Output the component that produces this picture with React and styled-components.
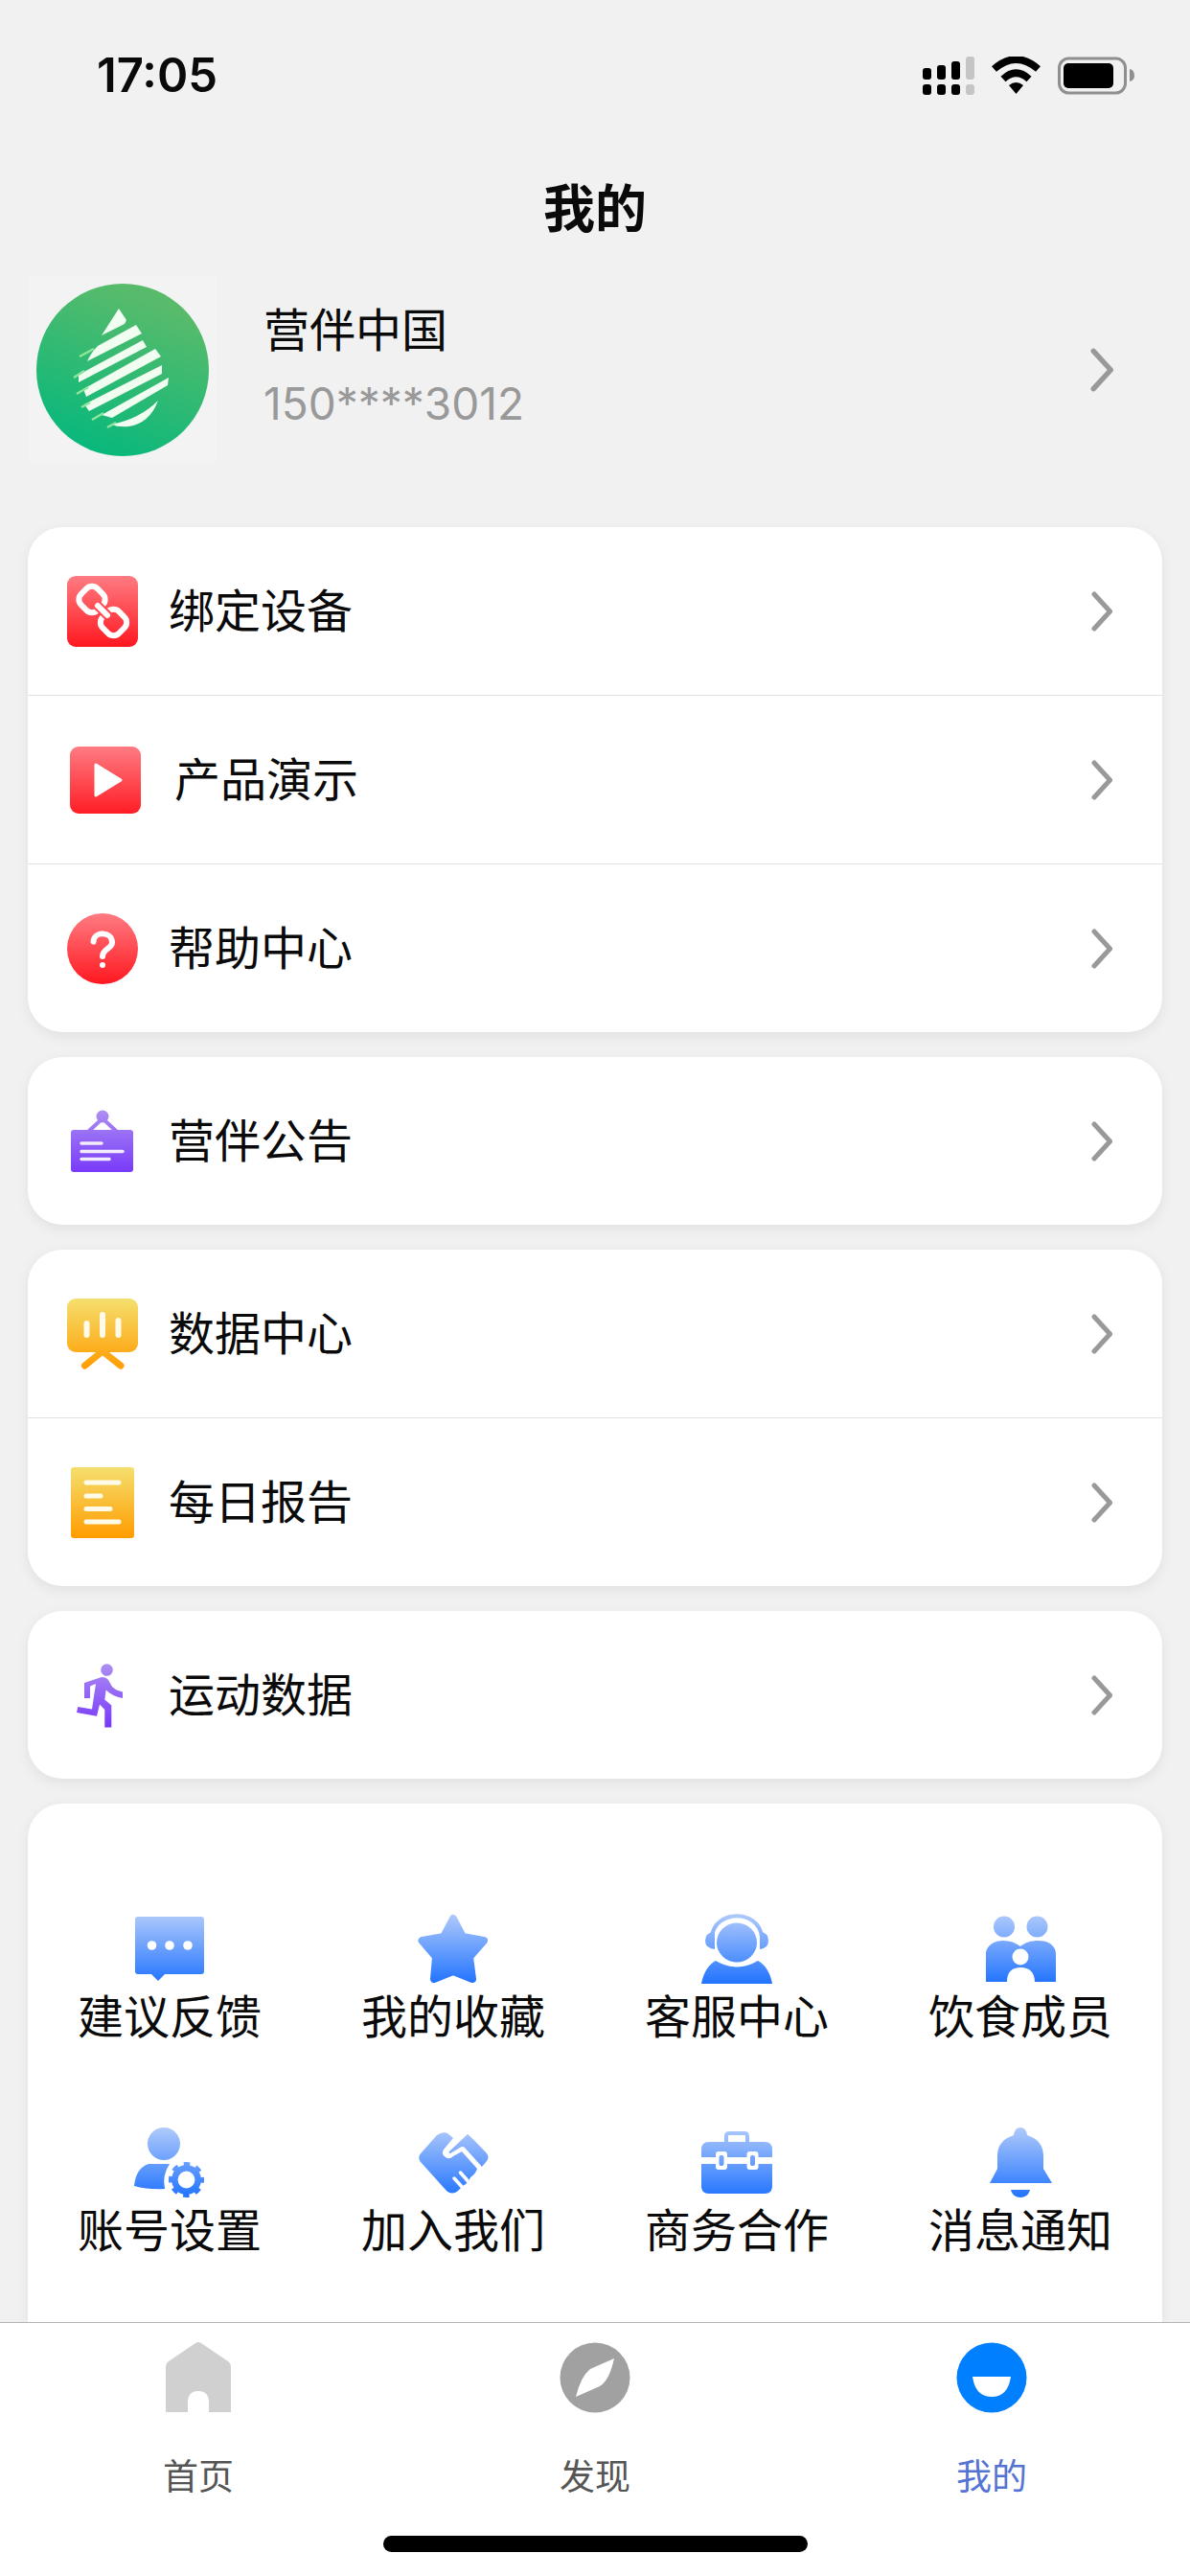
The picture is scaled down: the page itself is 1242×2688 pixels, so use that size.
import React, {useState} from 'react';
import styled, {createGlobalStyle} from 'styled-components';

const GlobalStyle = createGlobalStyle`
  * {
    box-sizing: border-box;
  }
  body {
    margin: 0;
    background-color: #f1f1f1;
    color: #0a0a0a;
    font-family: Inter, "Noto Sans CJK SC", sans-serif;
  }
`;

const Screen = styled.div`
  display: flex;
  flex-direction: column;
  height: 100vh;
`;

const StatusBar = styled.header`
  display: flex;
  flex-direction: row;
  align-items: center;
  justify-content: space-between;
  height: 158px;
  flex: none;
  padding: 0 58px 0 101px;
`;

const Time = styled.span`
  font-size: 49px;
  font-weight: 600;
  line-height: 60px;
`;

const StatusIcons = styled.div`
  display: flex;
  align-items: center;
  gap: 18px;
`;

const Title = styled.h1`
  flex: none;
  margin: 0;
  font-size: 54px;
  font-weight: 700;
  line-height: 122px;
  text-align: center;
`;

const Content = styled.main`
  display: flex;
  flex-direction: column;
  flex: 1;
  min-height: 0;
  overflow: hidden;
`;

const Profile = styled.a`
  display: flex;
  align-items: center;
  flex: none;
  padding: 8px 80px 66px 30px;
  color: inherit;
  text-decoration: none;
`;

const AvatarTile = styled.div`
  display: flex;
  padding: 8px;
  background-color: #f3f3f3;
`;

const ProfileText = styled.div`
  flex: 1;
  margin-left: 49px;
  padding-bottom: 6px;
`;

const UserName = styled.div`
  font-size: 48px;
  line-height: 76px;
`;

const Phone = styled.div`
  color: #999999;
  font-size: 46px;
  line-height: 76px;
`;

const CardList = styled.div`
  display: flex;
  flex-direction: column;
  flex: 1;
  gap: 26px;
  padding: 0 29px;
`;

const Card = styled.section`
  flex: ${props => props.$fill ? '1' : 'none'};
  border-radius: ${props => props.$fill ? '36px 36px 0 0' : '36px'};
  background-color: #ffffff;
  box-shadow: 0 4px 14px rgba(0, 0, 0, 0.07);
`;

const Row = styled.a`
  display: flex;
  align-items: center;
  height: 175px;
  padding: 0 52px 0 41px;
  color: inherit;
  text-decoration: none;

  & + & {
    height: 176px;
    border-top: 1px solid #e2e2e2;
  }
`;

const RowLabel = styled.span`
  flex: 1;
  margin-left: 32px;
  font-size: 48px;
  line-height: 60px;
`;

const Grid = styled.div`
  display: grid;
  grid-template-columns: repeat(4, 1fr);
  row-gap: 85px;
  padding-top: 115px;
`;

const GridItem = styled.a`
  display: flex;
  flex-direction: column;
  align-items: center;
  gap: 4px;
  color: inherit;
  font-size: 48px;
  line-height: 60px;
  text-decoration: none;
`;

const BottomBar = styled.footer`
  position: relative;
  flex: none;
  padding-bottom: 25px;
  border-top: 1px solid #b4b4b4;
  background-color: #ffffff;
`;

const Tabs = styled.nav`
  display: flex;
`;

const Tab = styled.button`
  display: flex;
  flex: 1;
  flex-direction: column;
  align-items: center;
  gap: 40px;
  padding: 20px 0 0;
  border: none;
  background: none;
  color: ${props => props.$active ? '#5573d4' : '#555555'};
  font-family: inherit;
  font-size: 37px;
  line-height: 54px;
  cursor: pointer;
`;

const HomeIndicator = styled.div`
  width: 443px;
  height: 17px;
  margin: 34px auto 0;
  border-radius: 9px;
  background-color: #000000;
`;

const HiddenSvg = styled.svg`
  position: absolute;
`;

// shared top to bottom gradients, every icon is drawn on a 74px high box
const gradients = [
  {id: 'red', from: '#ff7b82', to: '#ff1820'},
  {id: 'purple', from: '#b094f2', to: '#7433fa'},
  {id: 'yellow', from: '#f5df6e', to: '#ff9c00'},
  {id: 'blue', from: '#b0cafb', to: '#1f72ff'},
];

function Gradients(){
  return (
    <HiddenSvg width="0" height="0" aria-hidden="true">
      <defs>
        {gradients.map(g => (
          <linearGradient key={g.id} id={g.id} gradientUnits="userSpaceOnUse" x1="0" y1="0" x2="0" y2="74">
            <stop offset="0" stopColor={g.from} />
            <stop offset="1" stopColor={g.to} />
          </linearGradient>
        ))}
      </defs>
    </HiddenSvg>
  );
}

function Icon({width = 74, height = 74, children}){
  return (
    <svg width={width} height={height} viewBox={`0 0 ${width} ${height}`} fill="none" aria-hidden="true">
      {children}
    </svg>
  );
}

function Chevron({height = 42}){
  return (
    <svg width={height / 2 + 1} height={height} viewBox="0 0 22 42" fill="none" stroke="#999999" strokeWidth="5" strokeLinecap="round" strokeLinejoin="round" aria-hidden="true">
      <path d="M3 3L19.5 21L3 39" />
    </svg>
  );
}

const LinkIcon = () => (
  <Icon>
    <rect width="74" height="74" rx="9" fill="url(#red)" />
    <g stroke="#fff" strokeWidth="6">
      <rect x="14" y="12.5" width="24" height="24" rx="8" transform="rotate(45 26 24.5)" />
      <rect x="36.5" y="36.5" width="24" height="24" rx="8" transform="rotate(45 48.5 48.5)" />
    </g>
    <path d="M31 30L43 42" stroke="#ff4850" strokeWidth="10" />
    <path d="M32 31L42 41" stroke="#fff" strokeWidth="6" strokeLinecap="round" />
  </Icon>
);

const PlayIcon = () => (
  <Icon width={80} height={70}>
    <rect x="3" width="74" height="70" rx="9" fill="url(#red)" />
    <path d="M30 19L56 35L30 51Z" fill="#fff" stroke="#fff" strokeWidth="3" strokeLinejoin="round" />
  </Icon>
);

const HelpIcon = () => (
  <Icon>
    <circle cx="37" cy="37" r="37" fill="url(#red)" />
    <path d="M27.5 29.500C28 18.500 47 18.500 47 30.500C47 37 37 37 37 45" stroke="#fff" strokeWidth="6" strokeLinecap="round" />
    <circle cx="37" cy="54" r="3" fill="#fff" />
  </Icon>
);

const NoticeIcon = () => (
  <Icon>
    <circle cx="37" cy="11" r="6.500" fill="url(#purple)" />
    <path d="M22 27L37 13L52 27" stroke="url(#purple)" strokeWidth="4" />
    <rect x="4" y="25" width="65" height="44" rx="3" fill="url(#purple)" />
    <path d="M15 39H36M15 47.500H58M15 55.500H44" stroke="#f3ecff" strokeWidth="3.500" strokeLinecap="round" />
  </Icon>
);

const BoardIcon = () => (
  <Icon>
    <path d="M18.500 70L37 55L56 70" stroke="url(#yellow)" strokeWidth="7" strokeLinecap="round" />
    <rect width="74" height="56" rx="9" fill="url(#yellow)" />
    <path d="M20.500 26V38M37 17V38M53.500 23V38" stroke="#fffbe8" strokeWidth="6" strokeLinecap="round" />
  </Icon>
);

const ReportIcon = () => (
  <Icon>
    <rect x="4" y="0" width="66" height="74" rx="3" fill="url(#yellow)" />
    <path d="M20 16H54M20 30H35M20 43.500H45M20 57H54" stroke="#fffbe8" strokeWidth="5" strokeLinecap="round" />
  </Icon>
);

const RunIcon = () => (
  <Icon>
    <circle cx="41.500" cy="10.500" r="6.300" fill="url(#purple)" />
    <path d="M18 24L36 18Q41 18 43 21L47 28Q51 32 58 33.500V40Q47 38 40.700 31.500L39.300 41.500L46.300 47.500V70.500H39.300V52L34 46.500L31 58.800L10 55L11.300 49L26 51.500L30 25L24 27.500V40H18Z" fill="url(#purple)" />
  </Icon>
);

const FeedbackIcon = () => (
  <Icon>
    <path d="M4 3H70Q73 3 73 6V60Q73 63 70 63H32L25 70L18 63H4Q1 63 1 60V6Q1 3 4 3Z" fill="url(#blue)" />
    <circle cx="18.500" cy="33" r="4.800" fill="#fff" />
    <circle cx="37" cy="33" r="4.800" fill="#fff" />
    <circle cx="56" cy="33" r="4.800" fill="#fff" />
  </Icon>
);

const StarIcon = () => (
  <Icon>
    <path d="M37 5L47 24L69 28L54 45L57 68L37 60L17 68L19 45L4.500 28L27 24Z" fill="url(#blue)" stroke="url(#blue)" strokeWidth="8" strokeLinejoin="round" />
  </Icon>
);

const ServiceIcon = () => (
  <Icon>
    <ellipse cx="37" cy="30" rx="21" ry="20.500" fill="url(#blue)" />
    <path d="M11 24C14 -5 60 -5 63 24" stroke="url(#blue)" strokeWidth="4" />
    <path d="M14 18V37Q4 36 4 28Q4 20 14 18ZM61 18V37Q70 36 70 28Q70 20 61 18Z" fill="url(#blue)" />
    <path d="M0 73C2 62 7 53 15 49Q37 62 59 49C67 53 72 62 74 73Z" fill="url(#blue)" />
  </Icon>
);

const FamilyIcon = () => (
  <Icon>
    <circle cx="20" cy="13.500" r="11" fill="url(#blue)" />
    <circle cx="54.500" cy="13.500" r="11" fill="url(#blue)" />
    <path d="M1 71V42C1 33 10 28 19 28C26 28 32 30 37 34C42 30 48 28 56 28C66 28 74 33 74 42V71H52C52 61 46 56 37.500 56C28 56 23 61 23 71Z" fill="url(#blue)" />
    <circle cx="37" cy="45" r="8.500" fill="#fff" />
  </Icon>
);

const AccountIcon = () => (
  <Icon>
    <circle cx="31" cy="17" r="17" fill="url(#blue)" />
    <path d="M15 38H37Q29 50 32 64Q15 65 0 61Q2 42 15 38Z" fill="url(#blue)" />
    <circle cx="54.500" cy="54.500" r="12.200" stroke="url(#blue)" strokeWidth="6.500" />
    <circle cx="54.500" cy="54.500" r="16.500" stroke="url(#blue)" strokeWidth="4" strokeDasharray="6.480" strokeDashoffset="3.240" />
  </Icon>
);

const JoinIcon = () => (
  <Icon>
    <path d="M20 8Q26 4 31 6L37 11L27 23Q24 28 29 31Q33 34 37 30L46 25L62 43Q60 49 55 52Q53 58 47 61L42 66Q36 71 30 66L3 36Q-1 31 4 26Z" fill="url(#blue)" />
    <path d="M52 7Q55 9 72 27Q75 31 72 35L67 41L49 21Q47 19 44 21L34 27Q31 27 34 24Z" fill="url(#blue)" />
    <path d="M38 53L48 64M44.500 47L55 59" stroke="#fff" strokeWidth="3.500" strokeLinecap="round" />
  </Icon>
);

const BusinessIcon = () => (
  <Icon>
    <path d="M26 15V9Q26 6 29 6H45Q48 6 48 9V15" stroke="url(#blue)" strokeWidth="4" />
    <path d="M8 15H66Q74 15 74 23V31H0V23Q0 15 8 15ZM0 38H74V61Q74 69 66 69H8Q0 69 0 61Z" fill="url(#blue)" />
    <rect x="15" y="25" width="12" height="19" rx="3" fill="#fff" />
    <rect x="47.500" y="25" width="12" height="19" rx="3" fill="#fff" />
    <rect x="18.500" y="29" width="5" height="11" rx="2" fill="url(#blue)" />
    <rect x="51" y="29" width="5" height="11" rx="2" fill="url(#blue)" />
  </Icon>
);

const BellIcon = () => (
  <Icon>
    <path d="M30 8Q31 0 37 0Q43 0 44 8C56 12 61 19 61 30V43L70 58H5L13 43V30C13 19 18 12 30 8ZM27 65H47Q45 73 37 73Q29 73 27 65Z" fill="url(#blue)" />
  </Icon>
);

const HomeIcon = () => (
  <Icon>
    <path d="M34 1Q37 -1 40 1L68 20Q71 22 71 26V73H48V63Q48 51 37 51Q26 51 26 63V73H3V26Q3 22 6 20Z" fill="#d0d0d0" />
  </Icon>
);

const DiscoverIcon = () => (
  <Icon>
    <circle cx="37" cy="37" r="36.500" fill="#a1a1a1" />
    <path d="M57 17Q52 40 42 46L17 57Q22 36 32 28Z" fill="#fff" />
  </Icon>
);

const MineIcon = () => (
  <Icon>
    <circle cx="37" cy="37" r="36.500" fill="#007fff" />
    <path d="M17 36H57Q54 57 37 57Q20 57 17 36Z" fill="#fff" />
  </Icon>
);

// two stacked rows, one for each sim card
const signalBars = [
  {x: 0, y: 12, color: '#000000'},
  {x: 15, y: 9, color: '#000000'},
  {x: 30, y: 5, color: '#000000'},
  {x: 45, y: 0, color: '#c5c5c5'},
];

function Signal(){
  return (
    <Icon width={54} height={40}>
      {signalBars.map(bar => (
        <g key={bar.x} fill={bar.color}>
          <rect x={bar.x} y={bar.y} width="9" height={24 - bar.y} rx="3" />
          <rect x={bar.x} y="29" width="9" height="11" rx="3" />
        </g>
      ))}
    </Icon>
  );
}

function Wifi(){
  return (
    <Icon width={51} height={40}>
      <path d="M2.500 13Q25.500 -7 48.500 13" stroke="#000" strokeWidth="7.500" />
      <path d="M12 23.500Q25.500 11 39 23.500" stroke="#000" strokeWidth="7.500" />
      <path d="M25.500 39L18 30Q25.500 24 33 30Z" fill="#000" />
    </Icon>
  );
}

function Battery(){
  return (
    <Icon width={80} height={40}>
      <rect x="1.500" y="2" width="69" height="36" rx="10" stroke="#8f8f8f" strokeWidth="3" />
      <rect x="6" y="7" width="52" height="26" rx="5" fill="#000" />
      <path d="M75 13Q80 14 80 20Q80 25 75 26Z" fill="#8f8f8f" />
    </Icon>
  );
}

function Avatar(){
  return (
    <svg width="180" height="180" viewBox="0 0 180 180" role="img" aria-label="营伴中国">
      <defs>
        <linearGradient id="avatar" x1="0.700" y1="0" x2="0.300" y2="1">
          <stop offset="0.100" stopColor="#58bb6b" />
          <stop offset="1" stopColor="#05b87c" />
        </linearGradient>
      </defs>
      <circle cx="90" cy="90" r="90" fill="url(#avatar)" />
      <g fill="#f0fdf0">
        <path d="M86 26L94 38L92 42L68 54Z" />
        <path d="M104 43L110 52L53 81Q57 72 64 65Z" />
        <path d="M111 59L115 66L44 103V95Z" />
        <path d="M124 68L130 76L52 118L49 110Z" />
        <path d="M131 85V94L55 133L50 126Z" />
        <path d="M138 98L137 106L79 140L68 137Z" />
        <path d="M127 122Q118 146 96 149Q86 150 78 147Q108 141 127 122Z" />
      </g>
      <path d="M45 76L60 68M39 98L50 91M42 115L54 108M47 129L56 124M58 142L70 135M74 150L83 145" stroke="#8be79b" strokeWidth="2.500" />
    </svg>
  );
}

const cards = [
  [
    {link: '#bind', title: '绑定设备', icon: LinkIcon},
    {link: '#demo', title: '产品演示', icon: PlayIcon},
    {link: '#help', title: '帮助中心', icon: HelpIcon},
  ],
  [
    {link: '#notice', title: '营伴公告', icon: NoticeIcon},
  ],
  [
    {link: '#data', title: '数据中心', icon: BoardIcon},
    {link: '#report', title: '每日报告', icon: ReportIcon},
  ],
  [
    {link: '#sport', title: '运动数据', icon: RunIcon},
  ],
];

const services = [
  {link: '#feedback', title: '建议反馈', icon: FeedbackIcon},
  {link: '#favorites', title: '我的收藏', icon: StarIcon},
  {link: '#service', title: '客服中心', icon: ServiceIcon},
  {link: '#members', title: '饮食成员', icon: FamilyIcon},
  {link: '#account', title: '账号设置', icon: AccountIcon},
  {link: '#join', title: '加入我们', icon: JoinIcon},
  {link: '#business', title: '商务合作', icon: BusinessIcon},
  {link: '#messages', title: '消息通知', icon: BellIcon},
];

const tabs = [
  {id: 'home', title: '首页', icon: HomeIcon},
  {id: 'discover', title: '发现', icon: DiscoverIcon},
  {id: 'mine', title: '我的', icon: MineIcon},
];

export default function App(){
  const [activeTab, setActiveTab] = useState('mine');

  return (
    <Screen>
      <GlobalStyle />
      <Gradients />
      <StatusBar>
        <Time>17:05</Time>
        <StatusIcons>
          <Signal />
          <Wifi />
          <Battery />
        </StatusIcons>
      </StatusBar>
      <Title>我的</Title>
      <Content>
        <Profile href="#profile">
          <AvatarTile><Avatar /></AvatarTile>
          <ProfileText>
            <UserName>营伴中国</UserName>
            <Phone>150****3012</Phone>
          </ProfileText>
          <Chevron height={46} />
        </Profile>
        <CardList>
          {cards.map(items => (
            <Card key={items[0].link}>
              {items.map(({link, title, icon: RowIcon}) => (
                <Row key={link} href={link}>
                  <RowIcon />
                  <RowLabel>{title}</RowLabel>
                  <Chevron />
                </Row>
              ))}
            </Card>
          ))}
          <Card $fill>
            <Grid>
              {services.map(({link, title, icon: ItemIcon}) => (
                <GridItem key={link} href={link}>
                  <ItemIcon />
                  {title}
                </GridItem>
              ))}
            </Grid>
          </Card>
        </CardList>
      </Content>
      <BottomBar>
        <Tabs>
          {tabs.map(({id, title, icon: TabIcon}) => (
            <Tab key={id} type="button" $active={id === activeTab} onClick={() => setActiveTab(id)}>
              <TabIcon />
              {title}
            </Tab>
          ))}
        </Tabs>
        <HomeIndicator />
      </BottomBar>
    </Screen>
  );
}
